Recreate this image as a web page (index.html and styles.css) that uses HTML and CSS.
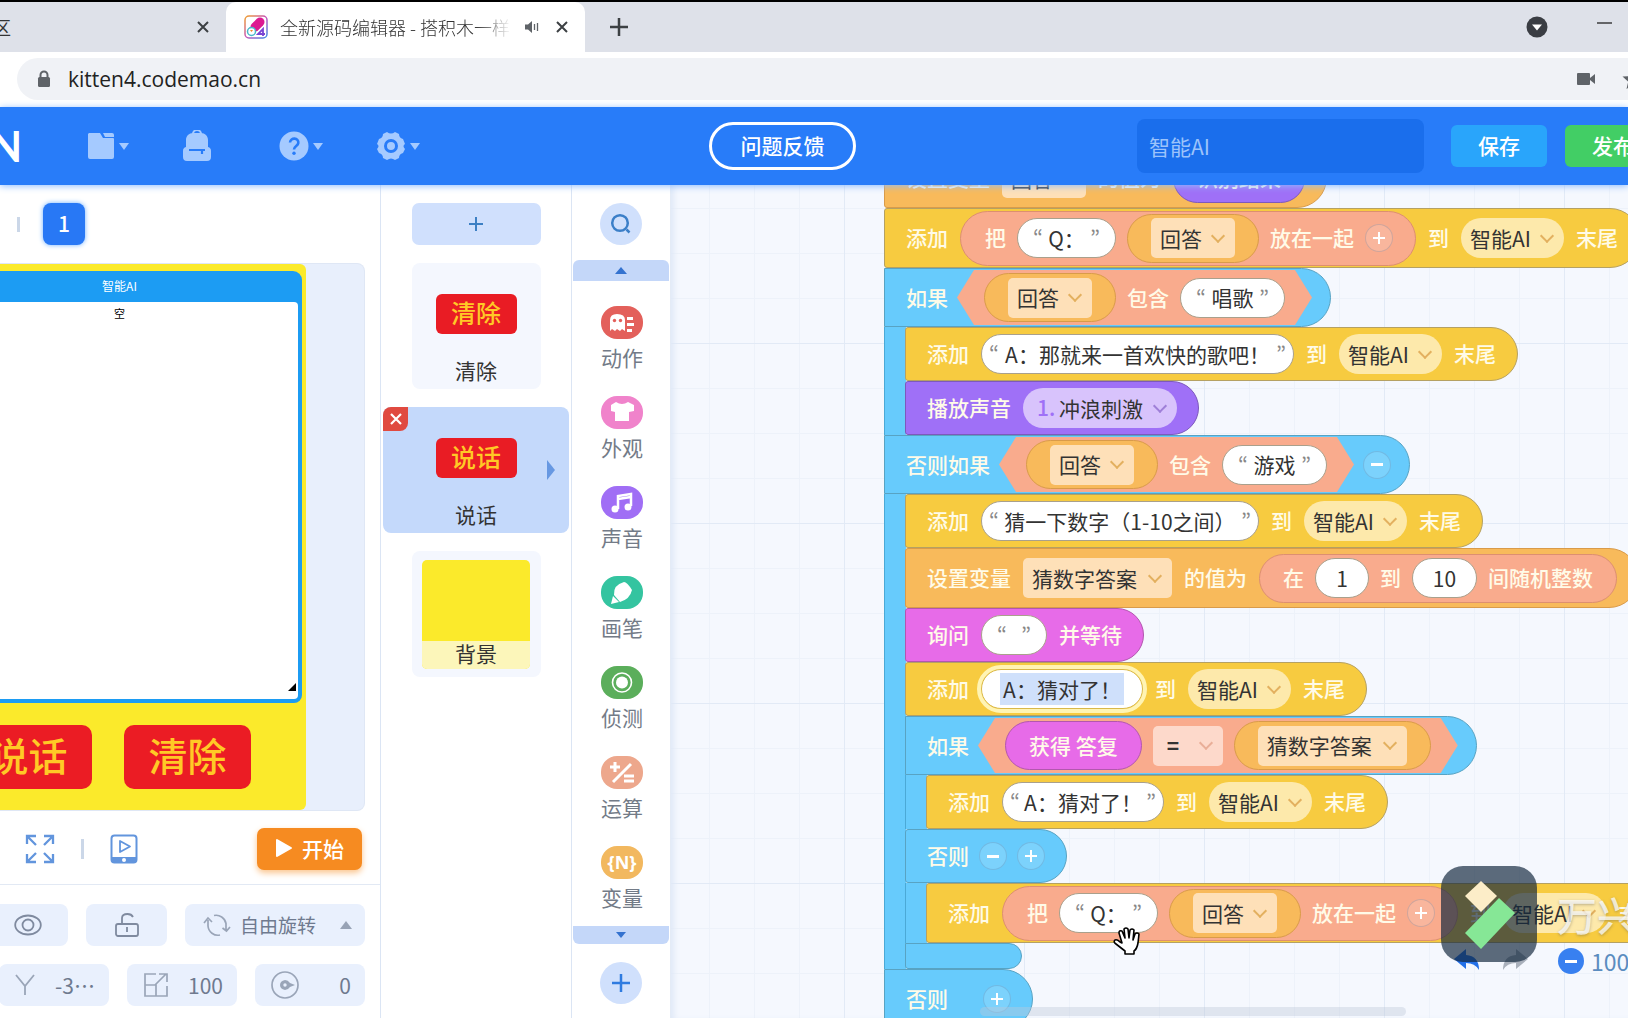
FILE: index.html
```html
<!DOCTYPE html>
<html lang="zh-CN">
<head>
<meta charset="utf-8">
<title>全新源码编辑器</title>
<link rel="stylesheet" href="styles.css">
</head>
<body>
<div class="tabs">
  <div class="tab tab-old"><span>区</span><button class="tab-close" aria-label="关闭"><svg width="14" height="14" viewBox="0 0 14 14"><path d="M2 2l10 10M12 2L2 12" stroke="#3c4043" stroke-width="2"/></svg></button></div>
  <div class="tab tab-active">
    <svg class="favicon" width="24" height="24" viewBox="0 0 24 24"><defs><linearGradient id="rainbow" x1="0" y1="0" x2="1" y2="1"><stop offset="0" stop-color="#f0a02c"/><stop offset=".5" stop-color="#c654b8"/><stop offset="1" stop-color="#3f8de8"/></linearGradient></defs><rect x="1" y="1" width="22" height="22" rx="4" fill="#fff" stroke="url(#rainbow)" stroke-width="1.5"/><path d="M11 12L16 7" stroke="#dd1a92" stroke-width="9" stroke-linecap="round"/><circle cx="7.500" cy="16.500" r="4" fill="#fff" stroke="#48b9c9" stroke-width="1.500"/><path d="M6 15l1.500 2L9 15z" fill="#f08b28"/><path d="M19 21v-7l-5 5h7" fill="none" stroke="#7a44d4" stroke-width="1.800"/></svg>
    <span class="tab-title">全新源码编辑器 - 搭积木一样</span>
    <svg width="16" height="14" viewBox="0 0 16 14"><path d="M1 4.500h3L8 1v12L4 9.500H1z" fill="#5f6368"/><path d="M10.500 4v6M13.500 3v8" stroke="#5f6368" stroke-width="1.300"/></svg>
    <button class="tab-close" aria-label="关闭"><svg width="14" height="14" viewBox="0 0 14 14"><path d="M2 2l10 10M12 2L2 12" stroke="#3c4043" stroke-width="2"/></svg></button>
  </div>
  <button class="tab-new" aria-label="新标签页"><svg width="18" height="18" viewBox="0 0 18 18"><path d="M9 0v18M0 9h18" stroke="#3c4043" stroke-width="2.500"/></svg></button>
  <div class="window-tools">
    <svg width="22" height="22" viewBox="0 0 22 22"><circle cx="11" cy="11" r="10.500" fill="#3a3d43"/><path d="M6 8.500h10l-5 6z" fill="#fff"/></svg>
    <svg width="16" height="12" viewBox="0 0 16 12"><path d="M1 2h15" stroke="#222" stroke-width="1.300"/></svg>
  </div>
</div>
<div class="address">
  <label class="omnibox">
    <svg width="14" height="18" viewBox="0 0 14 18"><rect x="1" y="7" width="12" height="10" rx="1.500" fill="#5f6368"/><path d="M3.500 8V5a3.500 3.500 0 0 1 7 0v3" fill="none" stroke="#5f6368" stroke-width="2"/></svg>
    <input class="url" value="kitten4.codemao.cn" aria-label="地址">
    <svg width="20" height="14" viewBox="0 0 20 14"><rect x="1" y="1" width="13" height="12" rx="1" fill="#5f6368"/><path d="M14 6l5-4v10l-5-4z" fill="#5f6368"/></svg>
    <svg class="star" width="22" height="22" viewBox="0 0 22 22"><path d="M11 1l3 7 7.500.600-5.700 5 1.700 7.400L11 17l-6.500 4 1.700-7.400-5.700-5L8 8z" fill="#5f6368"/></svg>
  </label>
</div>
<header class="topbar">
  <strong class="brand">KITTEN</strong>
  <nav class="menus">
    <button class="menu" aria-label="文件"><svg width="28" height="28" viewBox="0 0 28 28"><path d="M2 1h11l3 5h10a1 1 0 0 1 1 1v18a2 2 0 0 1-2 2H3a2 2 0 0 1-2-2V2z" fill="#a5caff"/><path d="M16 1h9a2 2 0 0 1 2 2v2H18z" fill="#a5caff"/></svg><i class="caret"></i></button>
    <button class="menu" aria-label="背包"><svg width="30" height="32" viewBox="0 0 30 32"><path d="M11 4a4 4 0 0 1 8 0" fill="none" stroke="#a5caff" stroke-width="2"/><path d="M4 10c0-4 3-7 7-7h8c4 0 7 3 7 7v7a4 4 0 0 1 3 4v6a4 4 0 0 1-4 4H5a4 4 0 0 1-4-4v-6a4 4 0 0 1 3-4z" fill="#a5caff"/><path d="M7 20h16M20 20v4" stroke="#287cf9" stroke-width="2.200"/></svg></button>
    <button class="menu" aria-label="帮助"><svg width="30" height="30" viewBox="0 0 30 30"><circle cx="15" cy="15" r="14.500" fill="#a5caff"/><path d="M11 11.500c.500-5.500 9-5 8.300.500-.400 3-4.300 3-4.300 6.500" fill="none" stroke="#287cf9" stroke-width="2.600"/><circle cx="15" cy="22.300" r="1.700" fill="#287cf9"/></svg><i class="caret"></i></button>
    <button class="menu" aria-label="设置"><svg width="30" height="32" viewBox="0 0 30 32"><path d="M11 2q4 3 8 0l4 2q0 4 4 5l2 5q-3 2 0 5l-2 4q-4 1-4 5l-4 2q-4-3-8 0l-4-2q0-4-4-5l-2-4q3-3 0-5l2-5q4-1 4-5z" fill="#a5caff"/><circle cx="15" cy="16" r="5.500" fill="none" stroke="#287cf9" stroke-width="3"/></svg><i class="caret"></i></button>
  </nav>
  <button class="feedback">问题反馈</button>
  <div class="project">
    <input class="project-name" value="智能AI" aria-label="作品名称">
    <button class="save">保存</button>
    <button class="publish">发布</button>
  </div>
</header>
<main class="editor">
  <section class="stage-panel">
    <div class="pages"><span class="bar"></span><button class="page">1</button></div>
    <div class="stage-wrap">
      <div class="stage">
        <div class="list-window">
          <div class="list-title">智能AI</div>
          <div class="list-body"><span>空</span><svg width="8" height="8" viewBox="0 0 8 8"><path d="M8 0v8H0z"/></svg></div>
        </div>
        <div class="stage-buttons"><button class="red">说话</button><button class="red">清除</button></div>
      </div>
    </div>
    <div class="stage-tools">
      <button class="plain" aria-label="全屏"><svg width="30" height="30" viewBox="0 0 30 30" fill="none" stroke="#6295dd" stroke-width="2.300"><path d="M2 10V2h9M2 2l9 9M19 2h9v8M28 2l-9 9M2 20v8h9M2 28l9-9M28 20v8h-9M28 28l-9-9"/></svg></button>
      <span class="bar"></span>
      <button class="plain" aria-label="预览"><svg width="28" height="30" viewBox="0 0 28 30"><rect x="1.500" y="1.500" width="25" height="27" rx="3" fill="none" stroke="#6295dd" stroke-width="2"/><path d="M2 23h24v4l-1 1H3l-1-1z" fill="#6295dd"/><circle cx="14" cy="26" r="2" fill="#fff"/><path d="M10 7v11l10-5.500z" fill="none" stroke="#6295dd" stroke-width="1.800" stroke-linejoin="round"/></svg></button>
      <button class="start"><svg width="18" height="20" viewBox="0 0 18 20"><path d="M2 2v16l14-8z" fill="#fff" stroke="#fff" stroke-width="2" stroke-linejoin="round"/></svg>开始</button>
    </div>
    <div class="props">
      <div class="prop-row">
        <button class="prop w81" aria-label="显示"><svg width="28" height="22" viewBox="0 0 28 22" fill="none" stroke="#7f8a9f" stroke-width="1.800"><ellipse cx="14" cy="11" rx="12.800" ry="9.500"/><circle cx="14" cy="11" r="5.500"/></svg></button>
        <button class="prop w81" aria-label="锁定"><svg width="26" height="26" viewBox="0 0 26 26" fill="none" stroke="#7f8a9f" stroke-width="1.800"><rect x="2" y="12" width="22" height="12" rx="2"/><path d="M8 12V6q0-4 5.500-4 4 0 5.500 3M13 15v5"/></svg></button>
        <button class="prop w180"><svg width="28" height="24" viewBox="0 0 28 24" fill="none" stroke="#9aa5b8" stroke-width="1.700"><path d="M11 2.500a10 10 0 0 1 12 8v7M27 14l-3.500 4-4-3M5 7v6a10 10 0 0 0 12 9M1 10l4-5 4 4"/></svg><span>自由旋转</span><i class="caret-up"></i></button>
      </div>
      <div class="prop-row">
        <label class="prop w110"><svg width="20" height="22" viewBox="0 0 20 22"><path d="M1 1l9 11 9-11M10 12v9" fill="none" stroke="#9aa5b8" stroke-width="1.800"/></svg><input value="-3⋯" aria-label="Y 坐标"></label>
        <label class="prop w110"><svg width="26" height="26" viewBox="0 0 26 26" fill="none" stroke="#9aa5b8" stroke-width="1.700"><path d="M13 2H2v22h22V14M2 13h11v11M12 13L23 2M16 2h8v8"/></svg><input value="100" aria-label="大小"></label>
        <label class="prop w110"><svg width="28" height="28" viewBox="0 0 28 28"><circle cx="14" cy="14" r="13" fill="none" stroke="#9aa5b8" stroke-width="1.700"/><path d="M14 9q-5 1-5 5t5 5q3 0 5-3l5-2-5-2q-2-3-5-3z" fill="#9aa5b8"/><circle cx="14" cy="14" r="1.700" fill="#e9f0fd"/></svg><input value="0" aria-label="角度"></label>
      </div>
    </div>
  </section>
  <section class="sprites">
    <button class="add-sprite" aria-label="添加角色"><svg width="14" height="14" viewBox="0 0 14 14"><path d="M7 0v14M0 7h14" stroke="#3d80c4" stroke-width="2"/></svg></button>
    <div class="sprite"><span class="thumb">清除</span><span class="sprite-name">清除</span></div>
    <div class="sprite sprite-on"><button class="remove" aria-label="删除"><svg width="12" height="12" viewBox="0 0 12 12"><path d="M1 1l10 10M11 1L1 11" stroke="#fff" stroke-width="2.200"/></svg></button><span class="thumb">说话</span><span class="sprite-name">说话</span><i class="sprite-next"></i></div>
    <div class="sprite sprite-back"><div class="backdrop"><span>背景</span></div></div>
  </section>
  <nav class="categories">
    <button class="round" aria-label="搜索"><svg width="22" height="22" viewBox="0 0 22 22" fill="none" stroke="#3b7fc8"><circle cx="10" cy="10" r="7.800" stroke-width="2.500"/><path d="M16.500 16.500l3 3" stroke-width="2.500"/></svg></button>
    <button class="scroll scroll-up" aria-label="向上"><i class="tri-up"></i></button>
    <div class="category-list">
      <button class="category"><span class="badge red-bg"><svg width="42" height="33" viewBox="0 0 42 33" fill="#fff"><path d="M9 25V14q0-6 7-6 8 0 8 6v11l-3-2-2 2-3-2-2 2-3-2z"/><circle cx="13.500" cy="14.500" r="1.700" fill="#e3605b"/><circle cx="19.500" cy="14.500" r="1.700" fill="#e3605b"/><path d="M26 11h6v3h-6zM26 17h7v3h-7zM26 23h5v3h-5z"/></svg></span>动作</button>
      <button class="category"><span class="badge pink-bg"><svg width="42" height="33" viewBox="0 0 42 33" fill="#fff"><path d="M15 6q6 4 12 0l6 3v6l-5 1v9H14v-9l-4-1V9z"/></svg></span>外观</button>
      <button class="category"><span class="badge violet-bg"><svg width="42" height="33" viewBox="0 0 42 33"><path d="M17 23V10l13-2v12M17 13l13-2" fill="none" stroke="#fff" stroke-width="2.500"/><circle cx="14" cy="23" r="3.500" fill="#fff"/><circle cx="27" cy="21" r="3.500" fill="#fff"/></svg></span>声音</button>
      <button class="category"><span class="badge green-bg"><svg width="42" height="33" viewBox="0 0 42 33" fill="#fff"><path d="M13 19q-1-10 10-13 3 0 8 8-2 9-12 12z"/><path d="M12 20l6 6-8 2z"/></svg></span>画笔</button>
      <button class="category"><span class="badge leaf-bg"><svg width="42" height="33" viewBox="0 0 42 33"><circle cx="21" cy="16.500" r="9.500" fill="none" stroke="#fff" stroke-width="1.600"/><circle cx="21" cy="16.500" r="6" fill="#fff"/></svg></span>侦测</button>
      <button class="category"><span class="badge peach-bg"><svg width="42" height="33" viewBox="0 0 42 33" stroke="#fff" stroke-width="3"><path d="M14 6v10M9 11h10M12 26L30 8M23 20h10M23 25h10"/></svg></span>运算</button>
      <button class="category"><span class="badge amber-bg">{N}</span>变量</button>
    </div>
    <button class="scroll scroll-down" aria-label="向下"><i class="tri-down"></i></button>
    <button class="round" aria-label="更多"><svg width="18" height="18" viewBox="0 0 18 18"><path d="M9 0v18M0 9h18" stroke="#2f7be0" stroke-width="2.500"/></svg></button>
  </nav>
  <section class="workspace">
    <div class="stack">
      <div class="block orange tall"><b>设置变量</b><span class="pick pick-square"><select aria-label="变量"><option>回答</option></select></span><b>的值为</b><span class="capsule violet"><b>识别结果</b></span></div>
      <div class="block yellow tall"><b>添加</b>
        <span class="capsule join"><b>把</b><span class="str str-q"><q></q><input value="Q：" aria-label="文本"><q></q></span><span class="capsule orange"><span class="pick pick-square"><select aria-label="变量"><option>回答</option></select></span></span><b>放在一起</b><button class="knob" aria-label="增加"><i class="plus"></i></button></span>
        <b>到</b><span class="pick pick-list"><select aria-label="列表"><option>智能AI</option></select></span><b>末尾</b></div>
      <div class="block blue mid"><b>如果</b><span class="hex"><span class="capsule orange"><span class="pick pick-square"><select aria-label="变量"><option>回答</option></select></span></span><b>包含</b><span class="str str-word"><q></q><input value="唱歌" aria-label="文本"><q></q></span></span></div>
      <div class="inside">
        <div class="block yellow"><b>添加</b><span class="str str-song"><q></q><input value="A：那就来一首欢快的歌吧！" aria-label="文本"><q></q></span><b>到</b><span class="pick pick-list"><select aria-label="列表"><option>智能AI</option></select></span><b>末尾</b></div>
        <div class="block violet"><b>播放声音</b><span class="pick pick-sound"><em>1.</em><select aria-label="声音"><option>冲浪刺激</option></select></span></div>
      </div>
      <div class="block blue mid"><b>否则如果</b><span class="hex"><span class="capsule orange"><span class="pick pick-square"><select aria-label="变量"><option>回答</option></select></span></span><b>包含</b><span class="str str-word"><q></q><input value="游戏" aria-label="文本"><q></q></span></span><button class="knob" aria-label="减少"><i class="minus"></i></button></div>
      <div class="inside">
        <div class="block yellow"><b>添加</b><span class="str str-guess"><q></q><input value="猜一下数字（1-10之间）" aria-label="文本"><q></q></span><b>到</b><span class="pick pick-list"><select aria-label="列表"><option>智能AI</option></select></span><b>末尾</b></div>
        <div class="block orange tall"><b>设置变量</b><span class="pick pick-answer"><select aria-label="变量"><option>猜数字答案</option></select></span><b>的值为</b><span class="capsule salmon"><b>在</b><span class="str num-1"><input value="1" aria-label="最小值"></span><b>到</b><span class="str num-10"><input value="10" aria-label="最大值"></span><b>间随机整数</b></span></div>
        <div class="block magenta"><b>询问</b><span class="str str-empty"><q></q><input value="" aria-label="问题"><q></q></span><b>并等待</b></div>
        <div class="block yellow"><b>添加</b><span class="str str-right editing"><input value="A：猜对了！" aria-label="文本"></span><b>到</b><span class="pick pick-list"><select aria-label="列表"><option>智能AI</option></select></span><b>末尾</b></div>
        <div class="block blue mid"><b>如果</b><span class="hex"><span class="capsule magenta"><b>获得 答复</b></span><span class="pick pick-equal"><select aria-label="比较"><option>=</option></select></span><span class="capsule orange"><span class="pick pick-answer"><select aria-label="变量"><option>猜数字答案</option></select></span></span></span></div>
        <div class="inside">
          <div class="block yellow"><b>添加</b><span class="str str-right"><q></q><input value="A：猜对了！" aria-label="文本"><q></q></span><b>到</b><span class="pick pick-list"><select aria-label="列表"><option>智能AI</option></select></span><b>末尾</b></div>
        </div>
        <div class="block blue else"><b>否则</b><button class="knob" aria-label="减少"><i class="minus"></i></button><button class="knob" aria-label="增加"><i class="plus"></i></button></div>
        <div class="inside">
          <div class="block yellow tall"><b>添加</b>
            <span class="capsule join"><b>把</b><span class="str str-q"><q></q><input value="Q：" aria-label="文本"><q></q></span><span class="capsule orange"><span class="pick pick-square"><select aria-label="变量"><option>回答</option></select></span></span><b>放在一起</b><button class="knob" aria-label="增加"><i class="plus"></i></button></span>
            <b>到</b><span class="pick pick-list"><select aria-label="列表"><option>智能AI</option></select></span><b>末尾</b></div>
        </div>
        <div class="block blue foot"></div>
      </div>
      <div class="block blue last"><b>否则</b><button class="knob" aria-label="增加"><i class="plus"></i></button></div>
    </div>
    <div class="h-scroll"></div>
    <div class="history">
      <button class="plain" aria-label="撤销"><svg width="28" height="24" viewBox="0 0 28 24"><path d="M13 1v6q13 1 13 15-4-7-13-7v6L1 11z" fill="#2370e8"/></svg></button>
      <button class="plain" aria-label="重做"><svg width="28" height="24" viewBox="0 0 28 24"><path d="M15 1v6Q2 8 2 22q4-7 13-7v6l12-10z" fill="#a9b0bb"/></svg></button>
    </div>
    <div class="zoom-tools"><button class="zoom-out" aria-label="缩小"><i class="minus"></i></button><span>100%</span></div>
    <div class="watermark"><svg width="96" height="96" viewBox="0 0 96 96"><rect width="96" height="96" rx="22" fill="#11263c" fill-opacity=".68"/><path d="M24 30l16-15 16 15-16 16z" fill="#fcedc8"/><path d="M24 67l34-35 16 15-34 36z" fill="#86e796"/></svg><span>万兴喵影</span></div>
    <svg class="hand" width="28" height="28" viewBox="0 0 28 28"><path d="M9 16L6 6q0-3 3-2l3 7-1-9q2-2 4 0l1 9 1-8q2-2 4 0l-1 10 2-6q2-2 4 0l-1 9q-1 6-4 8v3H12v-3L3 17q-3-2-1-4 2-1 5 2z" fill="#fff" stroke="#000" stroke-width="1.600" stroke-linejoin="round"/></svg>
  </section>
</main>
</body>
</html>
```
FILE: styles.css
```css
* { box-sizing: border-box; }
body {
  margin: 0;
  height: 100vh;
  display: flex;
  flex-direction: column;
  overflow: hidden;
  background: #fff;
  border-top: 2px solid #000;
  font: 21px/30px "Noto Sans CJK SC", sans-serif;
  color: #333;
}
button { border: 0; padding: 0; background: none; font: inherit; color: inherit; display: flex; align-items: center; justify-content: center; flex: none; }
input, select { border: 0; padding: 0; margin: 0; background: none; font: inherit; color: inherit; outline: 0; min-width: 0; }
select { appearance: none; }
svg { flex: none; display: block; }

/* browser chrome */
.tabs { height: 50px; flex: none; display: flex; background: #dee1e9; }
.tab { display: flex; align-items: center; flex: none; font-size: 18px; }
.tab-old { width: 226px; padding: 0 13px 0 0; justify-content: space-between; border-radius: 0 0 10px 0; }
.tab-old > span { width: 11px; direction: rtl; overflow: hidden; }
.tab-active { width: 359px; padding: 0 13px 0 18px; gap: 12px; background: #fff; border-radius: 10px 10px 0 0; }
.tab-title { flex: 1; overflow: hidden; white-space: nowrap; font-weight: 300; mask-image: linear-gradient(90deg, #000 85%, transparent); }
.tab-close { width: 20px; height: 20px; }
.tab-new { width: 67px; }
.window-tools { margin-left: auto; padding-right: 16px; display: flex; align-items: center; gap: 48px; }
.address { height: 55px; flex: none; padding: 6px 0 7px 17px; }
.omnibox { height: 42px; display: flex; align-items: center; gap: 17px; padding-left: 20px; background: #f0f2f6; border-radius: 21px 0 0 21px; overflow: hidden; }
.url { flex: 1; height: 36px; font: 21px "Open Sans", "Noto Sans", sans-serif; color: #222; }
.omnibox .star { margin: 0 -16px 0 9px; }

/* editor top bar */
.topbar { height: 78px; flex: none; display: flex; align-items: center; background: #287cf9; box-shadow: 0 1px 7px #8dbcff; z-index: 2; overflow: hidden; }
.brand { width: 22px; display: flex; justify-content: flex-end; font: 700 42px/50px Lato, sans-serif; color: #fff; flex: none; }
.menus { display: flex; gap: 53px; padding-left: 65px; }
.menu { gap: 4px; }
.menu:nth-child(3) { margin-left: 14px; }
.caret { border: 5px solid transparent; border-top: 7px solid #a5caff; border-bottom: 0; }
.feedback { width: 147px; height: 48px; margin-left: 289px; border: 3px solid #fff; border-radius: 24px; color: #fff; font-weight: 500; }
.project { margin: 0 -33px 0 auto; display: flex; align-items: center; flex: none; }
.project-name { width: 287px; height: 54px; padding: 0 12px; border-radius: 8px; background: #1a6eec; color: #9cc3fb; }
.save, .publish { width: 96px; height: 42px; border-radius: 6px; color: #fff; font-weight: 500; }
.save { margin: 0 18px 0 27px; background: #29a5fb; }
.publish { background: #42ce65; }
.feedback, .save, .publish, .page, .start { padding-bottom: 2px; }
.editor { flex: 1; min-height: 0; display: grid; grid-template: minmax(0, 1fr) / 381px 191px 99px minmax(0, 1fr); }

/* stage panel */
.stage-panel { display: flex; flex-direction: column; min-height: 0; border-right: 1px solid #dbe5f4; overflow: hidden; }
.bar { width: 3px; height: 20px; background: #cbd7e8; }
.pages { height: 78px; flex: none; display: flex; align-items: center; gap: 23px; padding: 0 0 0 17px; }
.pages .bar { height: 15px; }
.page { width: 42px; height: 42px; border-radius: 8px; background: #2878f5; color: #fff; box-shadow: 0 0 5px #6eb0ff; font-weight: 500; }
.stage-wrap { flex: 1; min-height: 0; margin-right: 15px; border-radius: 0 8px 8px 0; background: #e8effc; border: 1px solid #dfe7f5; border-left: 0; }
.stage { width: 306px; height: 100%; padding: 7px 4px 0 0; display: flex; flex-direction: column; background: #fbea2b; border-radius: 0 6px 6px 0; overflow: hidden; }
.list-window { flex: 1; min-height: 0; margin-left: -63px; padding: 0 4px 4px; display: flex; flex-direction: column; background: #1c9cf3; border-radius: 9px 9px 8px 8px; }
.list-title { height: 31px; text-align: center; color: #fff; font-size: 12px; }
.list-body { flex: 1; display: flex; flex-direction: column; align-items: center; justify-content: space-between; background: #fff; border-radius: 4px; font-size: 11px; line-height: 22px; color: #000; }
.list-body svg { align-self: flex-end; margin: 0 2px 8px 0; }
.stage-buttons { height: 107px; flex: none; padding: 22px 51px 0 0; display: flex; justify-content: flex-end; gap: 32px; }
.red { width: 127px; height: 64px; padding-bottom: 6px; border-radius: 10px; background: #eb1c24; color: #ffc926; font-size: 39px; font-weight: 500; }
.stage-tools { height: 73px; flex: none; display: flex; align-items: center; padding: 2px 18px 0 25px; gap: 26px; }
.start { width: 105px; height: 42px; margin-left: auto; gap: 9px; border-radius: 7px; background: #f68b21; color: #fff; font-weight: 500; box-shadow: 0 3px 6px #fbc58e; }
.props { flex: none; padding: 19px 15px 12px 0; border-top: 1px solid #e2e9f4; display: flex; flex-direction: column; gap: 18px; }
.prop-row { display: flex; justify-content: flex-end; gap: 18px; }
.prop { height: 42px; flex: none; display: flex; align-items: center; justify-content: center; border-radius: 8px; background: #e9f0fd; color: #6f7a8f; }
.w81 { width: 81px; }
.w110 { width: 110px; padding: 0 14px 0 16px; gap: 12px; }
.w110 input { flex: 1; text-align: right; }
.w180 { width: 180px; padding: 0 13px 0 18px; gap: 9px; font-size: 19px; }
.caret-up { margin-left: auto; border: 6px solid transparent; border-bottom: 8px solid #98a3b6; border-top: 0; }

/* sprites */
.sprites { padding: 18px 2px; display: flex; flex-direction: column; align-items: center; gap: 18px; border-right: 1px solid #dbe5f4; }
.add-sprite { width: 129px; height: 42px; border-radius: 7px; background: #d0e0fd; }
.sprite { width: 129px; height: 126px; flex: none; display: flex; flex-direction: column; align-items: center; justify-content: space-between; padding: 31px 0 4px; border-radius: 8px; background: #f4f7fe; position: relative; }
.thumb { width: 81px; height: 40px; border-radius: 6px; background: #e91c24; color: #ffc926; font-weight: 500; font-size: 25px; line-height: 36px; text-align: center; }
.sprite-on { width: 100%; background: #c4d9fb; }
.remove { position: absolute; left: 0; top: 0; width: 25px; height: 24px; border-radius: 8px 0 8px 0; background: #e04a40; }
.sprite-next { position: absolute; right: 14px; top: 53px; border: 10px solid transparent; border-left: 8px solid #6798e2; border-right: 0; }
.sprite-back { padding: 9px 0 8px; }
.backdrop { width: 108px; height: 109px; display: flex; flex-direction: column; justify-content: flex-end; border-radius: 5px; background: #fbea2b; overflow: hidden; text-align: center; }
.backdrop span { height: 28px; line-height: 25px; background: #fcf6ba; }

/* block categories */
.categories { padding: 18px 1px 14px; display: flex; flex-direction: column; align-items: center; border-right: 1px solid #e4ebf6; }
.round { width: 42px; height: 42px; border-radius: 50%; background: #d0e0fc; }
.scroll { width: 100%; background: #c4d7f9; }
.scroll-up { height: 21px; margin-top: 15px; border-radius: 6px 6px 0 0; }
.scroll-down { height: 18px; margin-bottom: 18px; border-radius: 0 0 6px 6px; }
.tri-up { border: 6px solid transparent; border-bottom: 7px solid #3472cf; border-top: 0; }
.tri-down { border: 5px solid transparent; border-top: 6px solid #3472cf; border-bottom: 0; }
.category-list { flex: 1; min-height: 0; padding: 25px 0 0 2px; overflow: hidden; }
.category { flex-direction: column; height: 90px; justify-content: flex-start; gap: 3px; color: #737b87; }
.badge { width: 42px; height: 33px; border-radius: 16px; color: #fff; font: 700 18px/32px "Noto Sans", sans-serif; text-align: center; }
.red-bg { background: #e3605b; }
.pink-bg { background: #f083cb; }
.violet-bg { background: #a06ef5; }
.green-bg { background: #34c4a0; }
.leaf-bg { background: #5bae5b; }
.peach-bg { background: #eda78c; }
.amber-bg { background: #f2b85f; }

/* canvas */
.workspace {
  position: relative;
  overflow: hidden;
  background:
    linear-gradient(90deg, #e2eaf6 1px, transparent 1px) 173px 0 / 180px 180px,
    linear-gradient(#e2eaf6 1px, transparent 1px) 0 158px / 180px 180px,
    linear-gradient(90deg, #edf2fa 1px, transparent 1px) 38px 0 / 45px 45px,
    linear-gradient(#edf2fa 1px, transparent 1px) 0 23px / 45px 45px,
    #f5f8fe;
  box-shadow: inset 6px 0 6px -3px #dfe8f7;
}
.stack { position: absolute; left: 213px; top: -37px; }
.stack b { padding-bottom: 2px; font-weight: 500; color: #fffbe8; white-space: nowrap; }
.block { width: max-content; height: 54px; display: flex; align-items: center; gap: 12px; padding: 0 21px; border: 1px solid; border-radius: 3px 27px 27px 3px; }
.mid { height: 59px; padding-right: 18px; gap: 9px; border-radius: 0 30px 30px 0; }
.tall { height: 60px; border-radius: 3px 30px 30px 3px; }
.else { gap: 10px; }
.last { height: 60px; width: 149px; border-radius: 0 30px 30px 0; justify-content: space-between; }
.foot { width: 117px; height: 26px; border-radius: 0 13px 13px 3px; }
.inside { padding-left: 21px; background: linear-gradient(90deg, #4ba9d6 1px, #67cbfc 1px, #67cbfc 22px, transparent 22px); }
.capsule { height: 49px; display: flex; align-items: center; gap: 11px; padding: 0 23px; border: 1px solid; border-radius: 25px; }
.capsule.join { height: 55px; border-radius: 28px; padding: 0 22px 0 24px; }
.yellow { background: #f7cb40; border-color: #b5a163; }
.orange { background: #f8ba5b; border-color: #d99b4a; }
.blue { background: #67cbfc; border-color: #58a3c3; }
.violet { background: #9f70f7; border-color: #7d59bb; }
.magenta { background: #e76be8; border-color: #b257ae; }
.salmon, .join { background: #f9ab8d; border-color: #dd8f71; }
.hex { height: 55px; display: flex; align-items: center; gap: 11px; padding: 0 27px; background: #f9ab8d; clip-path: polygon(17px 0, calc(100% - 17px) 0, 100% 50%, calc(100% - 17px) 100%, 17px 100%, 0 50%); }
.str { height: 40px; display: flex; align-items: center; padding: 0 7px; background: #fff; border: 1px solid #a9a08c; border-radius: 20px; color: #333; }
.str input { flex: 1; width: 0; height: 36px; padding-bottom: 1px; text-align: center; }
.str q { flex: none; width: 10px; height: 38px; line-height: 36px; font-family: "Noto Sans CJK KR", sans-serif; color: #888; quotes: none; }
.str q::before { content: "“"; }
.str q::after { content: none; }
.str q:last-child::before { content: "”"; }
.str-q { width: 99px; padding: 0 15px; }
.str-word { width: 105px; padding: 0 15px; }
.str-song { width: 313px; }
.str-guess { width: 278px; }
.str-empty { width: 66px; padding: 0 15px; }
.str-right { width: 162px; }
.num-1 { width: 54px; }
.num-10 { width: 65px; }
.editing { padding: 0 18px; border-color: #d8b84a; outline: 4px solid #fff4b4; }
.editing input { height: 32px; background: #cfe0fb; }
.pick { height: 40px; display: grid; align-items: center; border-radius: 5px; color: #333; }
.pick select { grid-area: 1 / 1; width: 100%; height: 40px; padding: 0 0 1px 9px; }
.pick::after { content: ""; grid-area: 1 / 1; justify-self: end; width: 8px; height: 8px; margin: 0 12px 5px 0; border: solid #e3b05f; border-width: 0 2px 2px 0; rotate: 45deg; pointer-events: none; }
.pick-square { width: 84px; background: #fee0b8; }
.pick-answer { width: 149px; background: #fee0b8; }
.pick-list { width: 103px; border-radius: 20px; background: #fde9ab; }
.pick-equal { width: 70px; background: #fdd9cb; font-weight: 700; }
.pick-equal select { padding-left: 14px; }
.pick-equal::after { border-color: #e9ae98; }
.pick-sound { width: 154px; border-radius: 20px; background: #d8c3fc; }
.pick-sound em { grid-area: 1 / 1; padding: 0 0 2px 14px; font-style: normal; font-weight: 500; color: #9f70f7; }
.pick-sound select { padding-left: 36px; }
.pick-sound::after { border-color: #9f7fd8; }
.knob { width: 28px; height: 28px; border: 1px solid rgb(80 110 150 / 25%); border-radius: 50%; background: rgb(255 255 255 / 14%); }
.plus, .minus { width: 12px; height: 12px; background: linear-gradient(#fff, #fff) center / 12px 3px no-repeat; }
.plus { background: linear-gradient(#fff, #fff) center / 12px 2px no-repeat, linear-gradient(#fff, #fff) center / 2px 12px no-repeat; }

/* floating over the canvas */
.h-scroll { position: absolute; left: 309px; bottom: 2px; width: 426px; height: 9px; border-radius: 5px; background: rgb(190 200 218 / 40%); }
.history { position: absolute; left: 782px; bottom: 46px; display: flex; gap: 20px; }
.zoom-tools { position: absolute; left: 887px; bottom: 42px; display: flex; align-items: center; gap: 7px; font-size: 23px; color: #5a8cc0; }
.zoom-out { width: 26px; height: 26px; border-radius: 50%; background: #3880f0; }
.watermark { position: absolute; left: 770px; bottom: 56px; display: flex; align-items: center; gap: 20px; white-space: nowrap; font-size: 40px; line-height: 48px; font-weight: 500; color: rgb(255 255 255 / 75%); text-shadow: 0 1px 3px rgb(80 80 80 / 40%); }
.hand { position: absolute; left: 442px; top: 742px; }
```
